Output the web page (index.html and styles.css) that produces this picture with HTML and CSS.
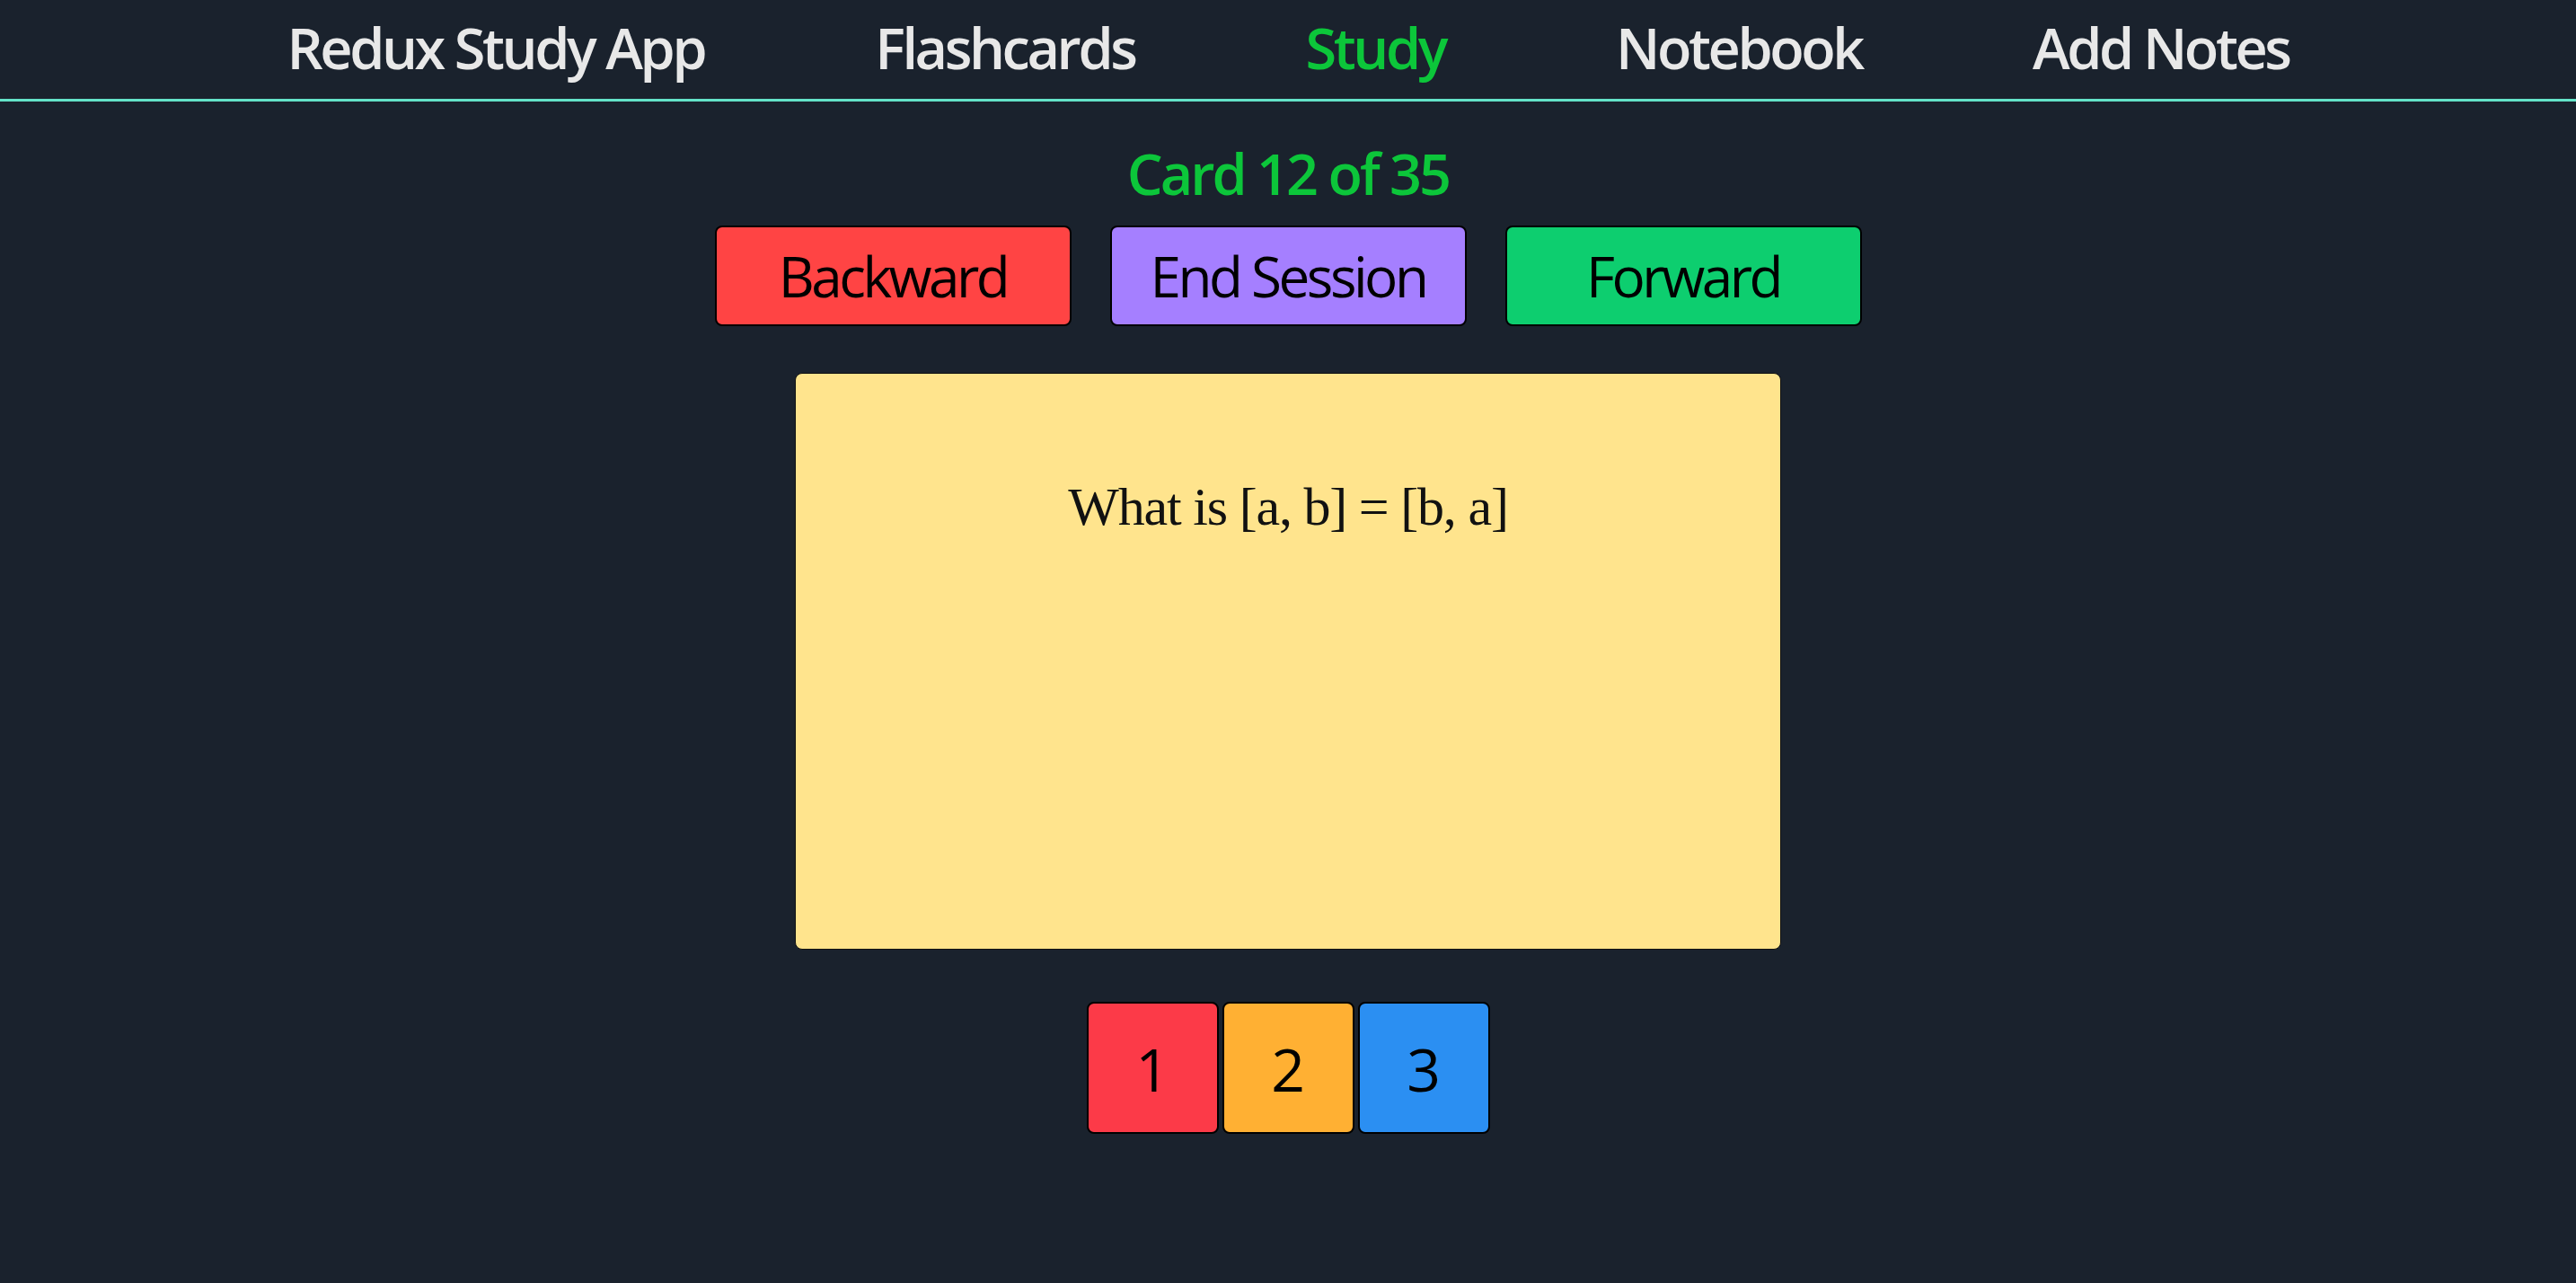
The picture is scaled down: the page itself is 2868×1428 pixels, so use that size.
FILE: index.html
```html
<!DOCTYPE html>
<html lang="en">
<head>
<meta charset="utf-8">
<title>Redux Study App</title>
<link rel="stylesheet" href="styles.css">
</head>
<body>
<nav class="nav">
  <a class="nav-link" href="#">Redux Study App</a>
  <a class="nav-link" href="#">Flashcards</a>
  <a class="nav-link active" href="#">Study</a>
  <a class="nav-link" href="#">Notebook</a>
  <a class="nav-link" href="#">Add Notes</a>
</nav>
<main class="study">
  <h2 class="counter">Card 12 of 35</h2>
  <div class="controls">
    <button class="btn btn-back">Backward</button>
    <button class="btn btn-end">End Session</button>
    <button class="btn btn-fwd">Forward</button>
  </div>
  <div class="card">
    <p class="card-text">What is [a, b] = [b, a]</p>
  </div>
  <div class="scores">
    <button class="score score-1">1</button>
    <button class="score score-2">2</button>
    <button class="score score-3">3</button>
  </div>
</main>
</body>
</html>
```
FILE: styles.css
```css
html, body {
  margin: 0;
  padding: 0;
  background: #1a222d;
  min-height: 100%;
}
body {
  font-family: "Open Sans", "Noto Sans", sans-serif;
  color: #e8e8e8;
}
.nav {
  display: flex;
  justify-content: center;
  align-items: center;
  gap: 190px;
  height: 105px;
  padding-bottom: 5px;
  border-bottom: 3px solid #64e3c8;
}
.nav-link {
  color: #e8e8e8;
  text-decoration: none;
  font-size: 63px;
  font-weight: 600;
  letter-spacing: -3.4px;
  line-height: 1;
}
.nav-link.active {
  color: #0cc63a;
}
.study {
  display: flex;
  flex-direction: column;
  align-items: center;
}
.counter {
  margin: 40px 0 0;
  color: #0cc63a;
  font-size: 63px;
  font-weight: 600;
  letter-spacing: -3px;
  line-height: 80px;
}
.controls {
  display: flex;
  gap: 43px;
  margin-top: 18px;
}
.btn {
  width: 397px;
  height: 112px;
  border: 2px solid #000;
  border-radius: 8px;
  font-family: inherit;
  font-size: 62px;
  font-weight: 500;
  letter-spacing: -3.5px;
  color: #000;
  padding: 0;
}
.btn-back { background: #ff4444; }
.btn-end { background: #a57fff; }
.btn-fwd { background: #0dce6f; }
.card {
  margin-top: 52px;
  width: 1098px;
  height: 642px;
  box-sizing: border-box;
  background: #ffe48d;
  border: 1px solid #111;
  border-radius: 8px;
}
.card-text {
  margin: 114px 0 0;
  text-align: center;
  font-family: "Liberation Serif", "DejaVu Serif", serif;
  font-size: 60px;
  color: #111;
  letter-spacing: -1.2px;
}
.scores {
  display: flex;
  gap: 4px;
  margin-top: 58px;
}
.score {
  width: 147px;
  height: 147px;
  border: 2px solid #000;
  border-radius: 8px;
  font-family: inherit;
  font-size: 66px;
  font-weight: 500;
  color: #000;
  padding: 0;
}
.score-1 { background: #fc3a48; }
.score-2 { background: #ffb033; }
.score-3 { background: #2b8ff2; }
```
